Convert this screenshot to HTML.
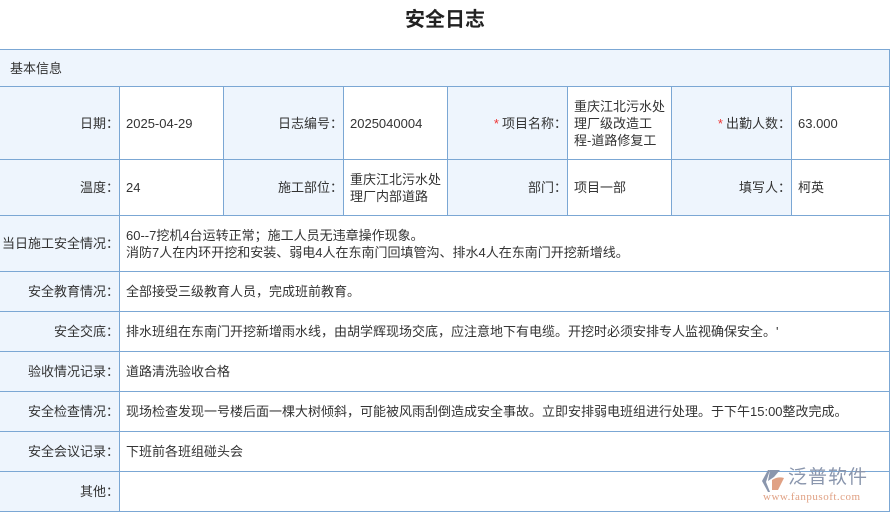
<!DOCTYPE html>
<html><head><meta charset="utf-8"><style>
*{margin:0;padding:0;box-sizing:border-box}
body{width:890px;height:513px;background:#fff;position:relative;overflow:hidden;font-family:"Liberation Sans","Noto Sans CJK SC",sans-serif;font-size:13px;color:#333}
.t{position:absolute;top:6px;left:0;width:890px;text-align:center;font-size:20px;font-weight:bold;color:#222;line-height:28px}
.c{position:absolute;display:flex;align-items:center;padding:0 6px;line-height:17px;border-right:1px solid #7ba7d4;border-bottom:1px solid #7ba7d4;white-space:nowrap}
.l{background:#eef5fd;justify-content:flex-end;text-align:right;padding-right:0}
.s{color:#e33;margin-right:3px}
</style></head><body>
<div class="t">安全日志</div>
<div class="c" style="left:0;top:49px;width:890px;height:38px;background:#eef5fd;border-top:1px solid #7ba7d4;padding-left:10px">基本信息</div>

<div class="c l" style="left:0;top:87px;width:120px;height:73px">日期：</div>
<div class="c" style="left:120px;top:87px;width:104px;height:73px">2025-04-29</div>
<div class="c l" style="left:224px;top:87px;width:120px;height:73px">日志编号：</div>
<div class="c" style="left:344px;top:87px;width:104px;height:73px">2025040004</div>
<div class="c l" style="left:448px;top:87px;width:120px;height:73px"><span class="s">*</span>项目名称：</div>
<div class="c" style="left:568px;top:87px;width:104px;height:73px">重庆江北污水处<br>理厂级改造工<br>程-道路修复工</div>
<div class="c l" style="left:672px;top:87px;width:120px;height:73px"><span class="s">*</span>出勤人数：</div>
<div class="c" style="left:792px;top:87px;width:98px;height:73px">63.000</div>

<div class="c l" style="left:0;top:160px;width:120px;height:56px">温度：</div>
<div class="c" style="left:120px;top:160px;width:104px;height:56px">24</div>
<div class="c l" style="left:224px;top:160px;width:120px;height:56px">施工部位：</div>
<div class="c" style="left:344px;top:160px;width:104px;height:56px">重庆江北污水处<br>理厂内部道路</div>
<div class="c l" style="left:448px;top:160px;width:120px;height:56px">部门：</div>
<div class="c" style="left:568px;top:160px;width:104px;height:56px">项目一部</div>
<div class="c l" style="left:672px;top:160px;width:120px;height:56px">填写人：</div>
<div class="c" style="left:792px;top:160px;width:98px;height:56px">柯英</div>

<div class="c l" style="left:0;top:216px;width:120px;height:56px">当日施工安全情况：</div>
<div class="c" style="left:120px;top:216px;width:770px;height:56px">60--7挖机4台运转正常；施工人员无违章操作现象。<br>消防7人在内环开挖和安装、弱电4人在东南门回填管沟、排水4人在东南门开挖新增线。</div>
<div class="c l" style="left:0;top:272px;width:120px;height:40px">安全教育情况：</div>
<div class="c" style="left:120px;top:272px;width:770px;height:40px">全部接受三级教育人员，完成班前教育。</div>
<div class="c l" style="left:0;top:312px;width:120px;height:40px">安全交底：</div>
<div class="c" style="left:120px;top:312px;width:770px;height:40px">排水班组在东南门开挖新增雨水线，由胡学辉现场交底，应注意地下有电缆。开挖时必须安排专人监视确保安全。'</div>
<div class="c l" style="left:0;top:352px;width:120px;height:40px">验收情况记录：</div>
<div class="c" style="left:120px;top:352px;width:770px;height:40px">道路清洗验收合格</div>
<div class="c l" style="left:0;top:392px;width:120px;height:40px">安全检查情况：</div>
<div class="c" style="left:120px;top:392px;width:770px;height:40px">现场检查发现一号楼后面一棵大树倾斜，可能被风雨刮倒造成安全事故。立即安排弱电班组进行处理。于下午15:00整改完成。</div>
<div class="c l" style="left:0;top:432px;width:120px;height:40px">安全会议记录：</div>
<div class="c" style="left:120px;top:432px;width:770px;height:40px">下班前各班组碰头会</div>
<div class="c l" style="left:0;top:472px;width:120px;height:40px">其他：</div>
<div class="c" style="left:120px;top:472px;width:770px;height:40px"></div>

<svg style="position:absolute;left:760px;top:468px" width="28" height="26" viewBox="0 0 28 26"><path d="M10 2 L20 2 L14 9 L8 13 Z" fill="#8a96ad"/><path d="M2 13 L8 2 L10 2 L6 14 L10 24 L8 24 Z" fill="#8a96ad"/><path d="M12 12 Q18 8 24 10 L18 22 L12 22 Z" fill="#e0a184"/></svg>
<div style="position:absolute;left:788px;top:467px;font-size:19px;color:#8a96ad;letter-spacing:1px;line-height:22px">泛普软件</div>
<div style="position:absolute;left:763px;top:491px;font-size:11px;color:#e0a184;font-family:'Liberation Serif',serif;letter-spacing:0.5px">www.fanpusoft.com</div>
</body></html>
